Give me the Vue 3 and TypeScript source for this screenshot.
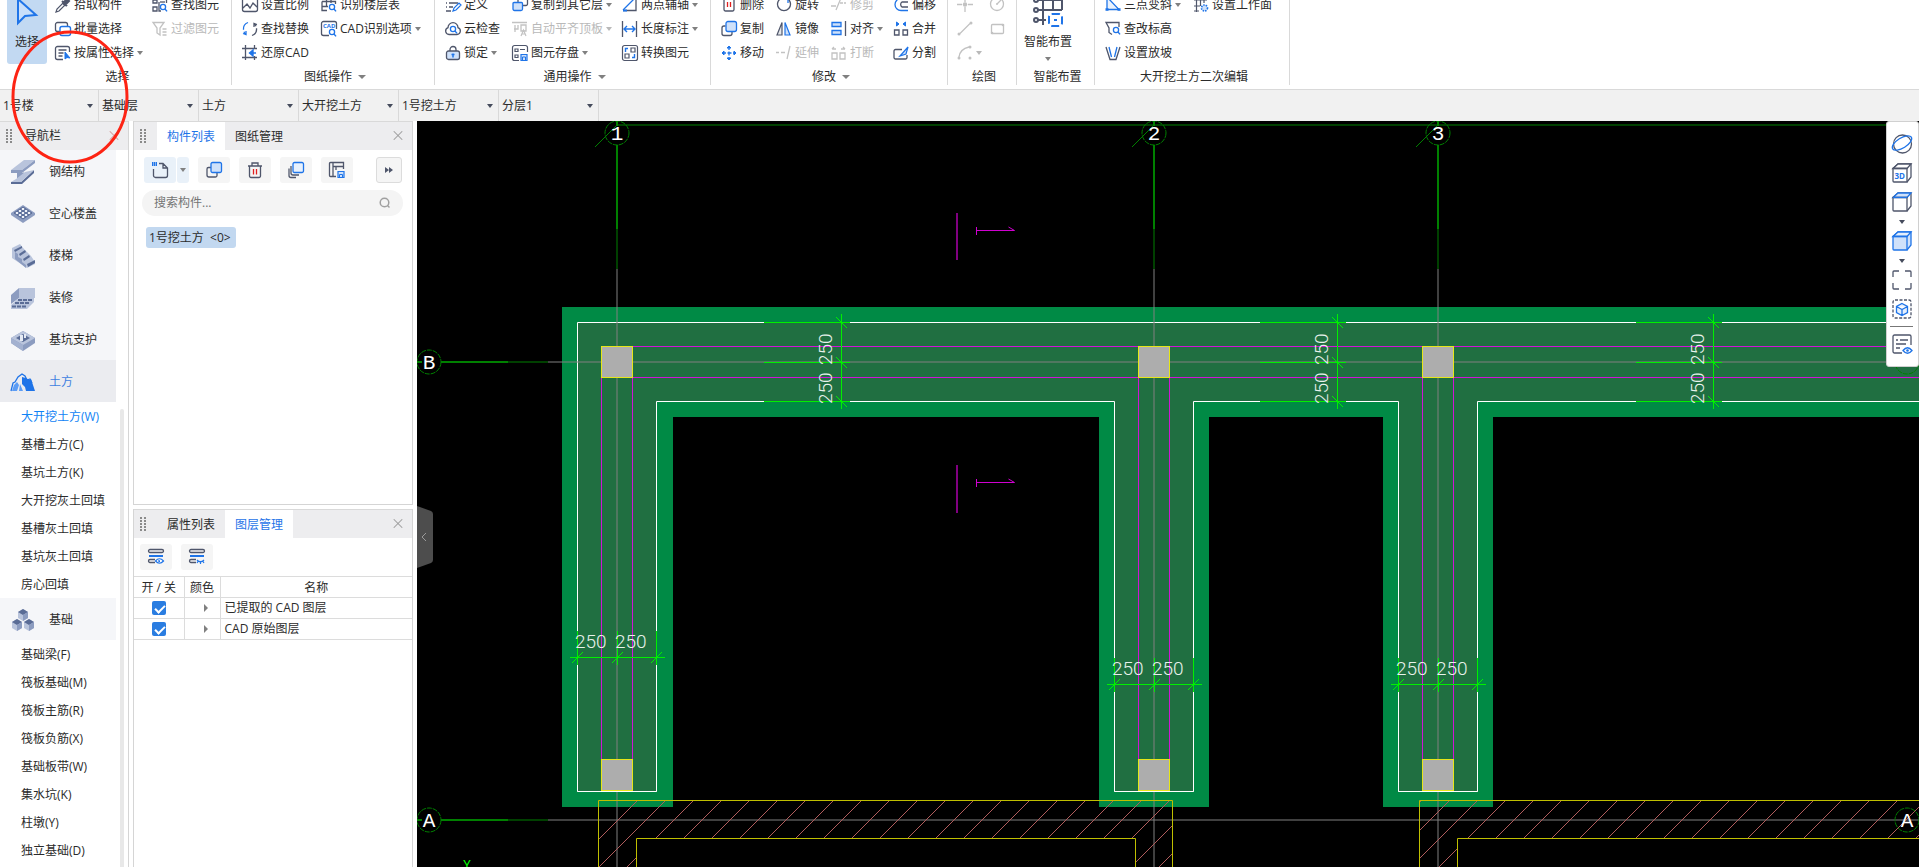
<script setup lang="ts">
import { ref } from 'vue'

interface Tool {
  label: string
  icon: string
  menu?: boolean
  off?: boolean
}
interface Group {
  title: string
  titleMenu?: boolean
  key: string
  columns: Tool[][]
}

const D = '#4f566b'
const B = '#1f74e8'
const L = '#cfe1fa'
const G = '#c2c2c2'
const R = '#e02020'

const s = (d: string, c: string, w = 1.3, fill = 'none', extra = '') =>
  `<path d="${d}" fill="${fill}" stroke="${c}" stroke-width="${w}" ${extra}/>`
const lens = (x: number, y: number) =>
  `<circle cx="${x}" cy="${y}" r="2.6" fill="#fff" stroke="${B}" stroke-width="1.3"/>` +
  s(`M${x + 2} ${y + 2}l2 2.4`, B, 1.4)

const icons: Record<string, string> = {
  pick: s('M1 15l1-3 6-6 2 2-6 6z', D, 1.2) + s('M7 4l5 5M8 6l4-4 2 2-4 4z', D, 2, D),
  batch: s('M5 10.500H2.500a2 2 0 0 1-2-2v-5a2 2 0 0 1 2-2h8a2 2 0 0 1 2 2V5', D) + s('M7 5.500h6.500a2 2 0 0 1 2 2v5a2 2 0 0 1-2 2H7a2 2 0 0 1-2-2v-5a2 2 0 0 1 2-2z', B, 1.4, '#fff'),
  attr: s('M8 14.500H2.500a2 2 0 0 1-2-2v-9a2 2 0 0 1 2-2h10a2 2 0 0 1 2 2V7M3.500 5h8M3.500 8h5M3.500 11h4', D) + s('M10 7v7l2-1.500 3 .5z', B, 1, B),
  find: s('M1 3h4v3H1zM1 10h4v4H1zM7 2h7.500v4M7 5v9h2', D) + s('M8 5h5', D) + lens(11, 10),
  filter: s('M1 1.500h11L8 7v7l-3-2V7zM10.500 8h4M10.500 11h4M10.500 14h4', G),
  ratio: s('M2.500 1.500h11a2 2 0 0 1 2 2v9a2 2 0 0 1-2 2h-11a2 2 0 0 1-2-2v-9a2 2 0 0 1 2-2zM1 11l4-4 3 4 3-5 4 4', D),
  replace: s('M6 1.500A7 7 0 0 0 3.500 13M1 12.500l3 1V10', B, 1.3, 'none', 'stroke-dasharray="9 2"') + s('M10 14.500A7 7 0 0 0 12.500 3M15 3.500l-3-1V6', D, 1.3, 'none', 'stroke-dasharray="9 2"'),
  restore: s('M3.500 0v15M0 3.500h15M12.500 0v4M12.500 11v4M0 12.500h15', D) + s('M14 8H8M11 5L7.500 8 11 11z', B, 1.4, B),
  floor: s('M5.500 1v9M1 4.500h13.500V7M1 4.500v5h6M1 9.500v4h5M10 1v5', D) + lens(11, 10),
  cadopt: s('M8 14.500H2.500a2 2 0 0 1-2-2v-10a2 2 0 0 1 2-2h11a2 2 0 0 1 2 2V8', D) + `<text x="2" y="7" font-size="6" font-weight="700" fill="${B}" font-family="Open Sans, sans-serif">CAD</text>` + lens(11, 11),
  define: s('M1 2h1M1 6h1M1 10h1M4 2h10M4 6h9M4 10h4M1 14h5', D) + s('M8 14l1-3 5-5 2 2-5 5z', B, 1.2),
  cloud: s('M4 13.500a3.500 3.500 0 0 1-1-6.800 5 5 0 0 1 10 0 3.500 3.500 0 0 1-1 6.800z', D) + lens(8, 8),
  lock: s('M5 6V4.500a3 3 0 0 1 6 0V6', D) + s('M3.500 6h9a2 2 0 0 1 2 2v4.500a2 2 0 0 1-2 2h-9a2 2 0 0 1-2-2V8a2 2 0 0 1 2-2z', D, 1.3, L) + s('M8 8.500v4M6.500 9.500h3', B, 1.5),
  copyto: s('M7 1h7a1.500 1.500 0 0 1 1.500 1.500V7A1.500 1.500 0 0 1 14 8.500h-3', D) + s('M6 5V2.500A1.500 1.500 0 0 1 7.500 1', D) + s('M2 5.500h7.500a1 1 0 0 1 1 1V12a1.500 1.500 0 0 1-1.500 1.500H2.500A1.500 1.500 0 0 1 1 12V6.500a1 1 0 0 1 1-1z', B, 1.3, L),
  align: s('M0 1.500h15M3 4v7M6 4v4H2M9 4h5v6H9z', G) + s('M9 15l2.500-6 2.500 6M10 13h3', G, 1.2),
  save: s('M3 4h3v2.500H3zM3 10h3v2.500H3zM8 4.500h5M15.500 7V2.500a2 2 0 0 0-2-2h-11a2 2 0 0 0-2 2v11a2 2 0 0 0 2 2H7', D, 1.2) + s('M9 9.500h6v6H9z', B, 1.2, L) + s('M10.500 15v-3h3v3', B, 1),
  axis: s('M1 13.500h13V1', D) + s('M1 13L13 1', B) + s('M1 13.500h4M11 1h3', B, 2),
  length: s('M.500 0v16M14.500 0v16', D) + s('M2 8h11M5 5L2 8l3 3M10 5l3 3-3 3', B, 1.4),
  convert: s('M2.500.500h11a2 2 0 0 1 2 2v11a2 2 0 0 1-2 2h-11a2 2 0 0 1-2-2v-11a2 2 0 0 1 2-2zM9 3h4v4H9zM3 9h4v4H3z', D, 1.2) + s('M3.500 7V3.500H6M12.500 9v3.500H10', B, 1.4),
  del: s('M3 0v12.500a1.500 1.500 0 0 0 1.500 1.500h7a1.500 1.500 0 0 0 1.500-1.500V0', D) + s('M6.500 5v5M9.500 5v5', R),
  copy: s('M4.500 5H3a2 2 0 0 0-2 2v5.500a2 2 0 0 0 2 2h6a2 2 0 0 0 2-2V11', D) + s('M7 .500h6.500a2 2 0 0 1 2 2v6a2 2 0 0 1-2 2H7a2 2 0 0 1-2-2v-6a2 2 0 0 1 2-2z', B, 1.3, L),
  move: s('M8 1v14M1 8h14', B, 1.3, 'none', 'stroke-dasharray="4 1.500"') + s('M6 3l2-2 2 2zM6 13l2 2 2-2zM3 6L1 8l2 2zM13 6l2 2-2 2z', B, 1, B),
  rotate: s('M4 2a6.500 6.500 0 1 0 8 0', D) + s('M12 6V1', B),
  mirror: s('M6 1.500v12.500H1z', D, 1.2, '#e5e7ea') + s('M9 1.500v12.500h5z', B, 1.2, L),
  extend: s('M0 7.500h3M5 7.500h4M11 14l3-13', G),
  trim: s('M0 9h5M5 13L10 1M9 6h3M13 6h2', G),
  alignto: s('M1 1.500h9v4H1zM1 9.500h9v4H1z', B, 1.3, L) + s('M14.500 0v15', D),
  breakup: s('M1 8h5v6H1zM9 8h5v6H9zM1 4h4M1 4l2-2M14 4h-4M14 4l-2-2', G),
  offset: s('M15 13.500H8a6 6 0 0 1 0-12h7', B) + s('M15 5H9a3 3 0 0 0 0 5h6', D),
  merge: s('M1.500 9h4.500v5H1.500zM10 9h4.500v5H10z', D) + s('M3 3h2M3.500 1L6 3 3.500 5zM13 3h-2M12.500 1L10 3l2.500 2z', B, 1, B),
  split: s('M9 4.500H2.500a1.500 1.500 0 0 0-1.500 1.500v6.500A1.500 1.500 0 0 0 2.500 14h10a1.500 1.500 0 0 0 1.500-1.500V10', D) + s('M7 11l8-9-2 7z', B, 1.2, L),
  point: s('M8 0v5M8 10v5M0 7.500h5M11 7.500h5', G) + `<circle cx="8" cy="7.500" r="2.200" fill="${G}"/>`,
  line: s('M3 12.500L13 2.500', G) + `<circle cx="2" cy="13" r="1.500" fill="${G}"/><circle cx="14" cy="2" r="1.500" fill="${G}"/>`,
  arc: s('M2 12Q3 4 12 2', G) + `<circle cx="2" cy="13" r="1.500" fill="${G}"/><circle cx="13" cy="2" r="1.500" fill="${G}"/><circle cx="13" cy="13" r="1.500" fill="${G}"/>`,
  circle: `<circle cx="8" cy="7" r="6.500" fill="none" stroke="${G}" stroke-width="1.300"/>` + s('M8 7l4-4M7 7h2', G),
  rect: s('M3.500 3.500h10a1 1 0 0 1 1 1v7a1 1 0 0 1-1 1h-10a1 1 0 0 1-1-1v-7a1 1 0 0 1 1-1z', G) + `<circle cx="14" cy="4" r="1.300" fill="${G}"/><circle cx="3" cy="12" r="1.300" fill="${G}"/>`,
  slope: s('M2 0v12.500h12z', B, 1.3, '#eaf2fd') + s('M.500 12.500h3M12.500 12.500h3', B, 2.4),
  height: s('M7 13.500l-3-2V7L1 1.500h13V6', D) + lens(11, 9),
  grade: s('M1 2l4 12.500h6L15 2', D) + s('M4 2l2.500 10M12 2L9.500 12', B),
  workface: s('M1 3h13M1 9h6M1 14h5M3.500 0v15M11 0v6M7.500 0v9', D, 1.2) + `<circle cx="11.500" cy="11" r="3" fill="${L}" stroke="${B}" stroke-width="1.600" stroke-dasharray="1.500 1"/>`,
  plus: s('M7 1.500h4l4.500 4.500v7.500a2 2 0 0 1-2 2h-10a2 2 0 0 1-2-2V7M11 1.500V6h4.500', D) + s('M0 1h5M0 3h5', B, 2, 'none', 'stroke-dasharray="1.500 .500"'),
  dup: s('M5 5.500H2.500a1.500 1.500 0 0 0-1.500 1.500v6a2 2 0 0 0 2 2h6.500a1.500 1.500 0 0 0 1.500-1.500V11', D) + s('M6.500.500h7.500a1.500 1.500 0 0 1 1.500 1.500v7a1.500 1.500 0 0 1-1.500 1.500H6.500A1.500 1.500 0 0 1 5 9V2A1.500 1.500 0 0 1 6.500.500z', B, 1.3, L),
  trash: s('M1 4h14M5 4V1h6v3M2.500 4v10a1.500 1.500 0 0 0 1.500 1.500h8a1.500 1.500 0 0 0 1.500-1.500V4', D) + s('M6.500 7v5.500M9.500 7v5.500', R),
  layers: s('M3 4v7a2 2 0 0 0 2 2h6M1 6.500v7a2 2 0 0 0 2 2h5', D) + s('M6.500.500h7.500a1.500 1.500 0 0 1 1.500 1.500v7a1.500 1.500 0 0 1-1.500 1.500H6.500A1.500 1.500 0 0 1 5 9V2A1.500 1.500 0 0 1 6.500.500z', B, 1.3, '#e8f1fd'),
  store: s('M7 14.500H1.500a1 1 0 0 1-1-1v-12a1 1 0 0 1 1-1h13V7M4 .500v14M4 4.500h11M7 4.500V8', D) + s('M9 9.500h6v6H9z', B, 1.2, L) + s('M10.500 15v-2.500h3V15', B, 1),
  eyeon: s('M2 .500h12a1.500 1.500 0 0 1 0 3H2a1.500 1.500 0 0 1 0-3M7 13.500H2a1.500 1.500 0 0 1 0-3h5', D) + s('M1 7h14', B, 2) + s('M7.500 12q4-4.500 8 0-4 4.500-8 0z', B, 1.2, '#fff') + s('M11 11v1.500h1', B),
  eyeoff: s('M2 .500h12a1.500 1.500 0 0 1 0 3H2a1.500 1.500 0 0 1 0-3M7 13.500H2a1.500 1.500 0 0 1 0-3h5', D) + s('M1 7h14', B, 2) + s('M8 11q3.500 3.500 7 0M9 12.500l-1 1.500M11.500 13v2M14 12.500l1 1.500', B, 1.2),
}

const groups: Group[] = [
  { title: '选择', key: 'pick', columns: [
    [{ label: '拾取构件', icon: 'pick' }, { label: '批量选择', icon: 'batch' }, { label: '按属性选择', icon: 'attr', menu: true }],
    [{ label: '查找图元', icon: 'find' }, { label: '过滤图元', icon: 'filter', off: true }]] },
  { title: '图纸操作', titleMenu: true, key: 'sheet', columns: [
    [{ label: '设置比例', icon: 'ratio' }, { label: '查找替换', icon: 'replace' }, { label: '还原CAD', icon: 'restore' }],
    [{ label: '识别楼层表', icon: 'floor' }, { label: 'CAD识别选项', icon: 'cadopt', menu: true }]] },
  { title: '通用操作', titleMenu: true, key: 'common', columns: [
    [{ label: '定义', icon: 'define' }, { label: '云检查', icon: 'cloud' }, { label: '锁定', icon: 'lock', menu: true }],
    [{ label: '复制到其它层', icon: 'copyto', menu: true }, { label: '自动平齐顶板', icon: 'align', menu: true, off: true }, { label: '图元存盘', icon: 'save', menu: true }],
    [{ label: '两点辅轴', icon: 'axis', menu: true }, { label: '长度标注', icon: 'length', menu: true }, { label: '转换图元', icon: 'convert' }]] },
  { title: '修改', titleMenu: true, key: 'modify', columns: [
    [{ label: '删除', icon: 'del' }, { label: '复制', icon: 'copy' }, { label: '移动', icon: 'move' }],
    [{ label: '旋转', icon: 'rotate' }, { label: '镜像', icon: 'mirror' }, { label: '延伸', icon: 'extend', off: true }],
    [{ label: '修剪', icon: 'trim', off: true }, { label: '对齐', icon: 'alignto', menu: true }, { label: '打断', icon: 'breakup', off: true }],
    [{ label: '偏移', icon: 'offset' }, { label: '合并', icon: 'merge' }, { label: '分割', icon: 'split' }]] },
  { title: '绘图', key: 'draw', columns: [
    [{ label: '', icon: 'point', off: true }, { label: '', icon: 'line', off: true }, { label: '', icon: 'arc', menu: true, off: true }],
    [{ label: '', icon: 'circle', off: true }, { label: '', icon: 'rect', off: true }]] },
  { title: '智能布置', key: 'smart', columns: [] },
  { title: '大开挖土方二次编辑', key: 'edit', columns: [
    [{ label: '三点变斜', icon: 'slope', menu: true }, { label: '查改标高', icon: 'height' }, { label: '设置放坡', icon: 'grade' }],
    [{ label: '设置工作面', icon: 'workface' }]] },
]

const pickers = [
  { name: '单体', value: '1号楼' },
  { name: '楼层', value: '基础层' },
  { name: '专业', value: '土方' },
  { name: '构件类型', value: '大开挖土方' },
  { name: '构件', value: '1号挖土方' },
  { name: '分层', value: '分层1' },
]

const P = '#8c9cc0'
const Q = '#b9c4dc'
const K = '#5a6c96'
const f = (d: string, c: string) => `<path d="${d}" fill="${c}"/>`
const nav = [
  { label: '钢结构', icon: f('M13 0h11L11 10H0z', Q) + f('M24 0v3L11 13H0v-3h11z', P) + f('M13 12v5L6 22v-9h6z', P) + f('M23 10v3L11 24H0v-2h10z', K) + f('M14 12l9-2-13 12H0l5-3z', Q), subs: [] },
  { label: '空心楼盖', icon: f('M12 3l12 8v2l-12 8L0 13v-2z', P) + '<path d="M3 11l9 6M6 9l9 6M9 7l9 6M12 5l9 6M21 11l-9 6M18 9l-9 6M15 7l-9 6M12 5l-9 6" stroke="#5a6c96" stroke-width="1"/>' + '<path d="M5 11h2M8 9h2M11 7h2M14 9h2M17 11h2M11 11h2M8 13h2M14 13h2M11 15h2" stroke="#eef1f8" stroke-width="2"/>', subs: [] },
  { label: '楼梯', icon: f('M1 4l8-4 4 5 3 3 4 4 4 6v2l-8 4L1 14z', Q) + f('M3 6l8-4v2L4 8zM8 10l6-4 1 2-6 4zM12 15l6-4 1 2-6 4zM16 20l8-4v3l-7 4z', K) + f('M4 8l3 2v3l4 2v3l4 3v3L4 15z', P), subs: [] },
  { label: '装修', icon: f('M8 2h16v10H8z', Q) + f('M8 2v10L0 18V9z', P) + f('M8 12h15v4l-7 7H0v-4z', Q) + '<path d="M7 14h15M4 17h15M1 20.500h15" stroke="#5a6c96" stroke-width="2" stroke-dasharray="4 1"/>', subs: [] },
  { label: '基坑支护', icon: f('M12 3l12 7v5l-12 8L0 15v-5z', P) + f('M12 3l12 7-12 7L0 10z', Q) + f('M12 6l7 4-7 4-7-4z', K) + f('M9 7h3v6H9zM13 6h2v4h-2z', '#e4e9f3') + f('M0 10l12 7v6L0 15z', '#a3b1d0'), subs: [] },
  { label: '土方', active: true, icon: f('M11 7l4 1 3 2 2-1 4 12h-9l-1-4-3-3z', B) + f('M3 15l3-3 2 3-2 6H1zM9 14l3 7H8z', '#5b9cf5') + s('M0 21l2-8 2-1 3-5 4-3 3 2 2 4 3-1 2 4', B, 1.3), subs: ['大开挖土方(W)', '基槽土方(C)', '基坑土方(K)', '大开挖灰土回填', '基槽灰土回填', '基坑灰土回填', '房心回填'] },
  { label: '基础', icon: ['6 1', '0 11', '12 11'].map(t => `<g transform="translate(${t})">` + f('M6 0l5 3v6l-5 3-5-3V3z', Q) + f('M6 0l5 3-5 3-5-3z', K) + f('M6 6l5-3v6l-5 3z', P) + '</g>').join(''), subs: ['基础梁(F)', '筏板基础(M)', '筏板主筋(R)', '筏板负筋(X)', '基础板带(W)', '集水坑(K)', '柱墩(Y)', '独立基础(D)'] },
]
const activeSub = ref('大开挖土方(W)')

const cube = (front: string, top: string, fill: string, topFill: string) =>
  s('M1 5.500L6 1h13v13l-4 5', front, 1.3, fill) + s('M1 5.500L6 1h13l-4 4.500z', top, 1.3, topFill) +
  s('M2 5.500h13V19H2a1 1 0 0 1-1-1V5.500z', front, 1.3, fill) + s('M1 5.500h14', top, 1.3)
const views = [
  { name: '动态观察', icon: '<circle cx="10.500" cy="10" r="9" fill="none" stroke="#4f566b" stroke-width="1.300"/><ellipse cx="10" cy="9" rx="11" ry="5" fill="none" stroke="#1f74e8" stroke-width="1.300" transform="rotate(-32 10 9)"/>' },
  { name: '三维', icon: cube(D, D, '#fff', '#fff') + `<text x="2.500" y="16" font-size="8" font-weight="700" fill="${B}" font-family="Open Sans, sans-serif">3D</text>` },
  { name: '俯视', icon: cube(D, B, '#fff', L), menu: true },
  { name: '实体', icon: cube(B, B, L, '#e5effc'), menu: true },
  { name: '全屏', icon: s('M1 7V2a1 1 0 0 1 1-1h5M13 1h5a1 1 0 0 1 1 1v5M19 13v5a1 1 0 0 1-1 1h-5M7 19H2a1 1 0 0 1-1-1v-5', D) },
  { name: '选中三维', icon: s('M3 1h14a2 2 0 0 1 2 2v14a2 2 0 0 1-2 2H3a2 2 0 0 1-2-2V3a2 2 0 0 1 2-2z', D, 1.3, 'none', 'stroke-dasharray="3 1.500"') + s('M10 4.500l5.500 3v6L10 16.500l-5.500-3v-6zM4.500 7.500l5.500 3 5.500-3M10 10.500v6', B, 1.3, '#e5effc') },
  { name: '显示设置', divided: true, icon: s('M10 19H2.500A1.500 1.500 0 0 1 1 17.500v-15A1.500 1.500 0 0 1 2.500 1h15A1.500 1.500 0 0 1 19 2.500V11M4 6h2M8 6h8M4 10h10M4 14h4', D) + s('M11 16.500q4.500-5.500 9 0-4.500 5.500-9 0z', B, 1.3, '#fff') + '<circle cx="15.500" cy="16.500" r="1.300" fill="#1f74e8"/>' },
]

const layers = ref([
  { name: '已提取的 CAD 图层', on: true },
  { name: 'CAD 原始图层', on: true },
])

const axes = [{ x: 617, n: '1' }, { x: 1154, n: '2' }, { x: 1438, n: '3' }]
const beamDims = [842, 1338, 1714]
const footDims = [{ x: 617, y: 657 }, { x: 1154, y: 684 }, { x: 1438, y: 684 }]
const hatch = Array.from({ length: 54 }, (_, i) => 1438 + i * 28)
const far = 4000
</script>

<template>
  <div class="app">
    <header class="ribbon">
      <section v-for="g in groups" :key="g.key" class="group" :class="g.key">
        <div class="body">
          <button v-if="g.key === 'pick'" class="big active" type="button">
            <svg width="22" height="26" viewBox="0 0 22 26"><path d="M2 1v24l7-7 11-1z" fill="#c9dffa" stroke="#1f74e8" stroke-width="2" /></svg>
            <span>选择</span>
          </button>
          <button v-if="g.key === 'smart'" class="big" type="button">
            <svg width="32" height="32" viewBox="0 0 32 32" fill="none" stroke="#4f566b" stroke-width="2">
              <path d="M11 0v30M21 0v16M6 5h24M6 15h24M6 25h8M30 5v10" />
              <circle cx="4" cy="5" r="2" /><circle cx="4" cy="15" r="2" /><circle cx="4" cy="25" r="2" />
              <rect x="17" y="19" width="13" height="12" rx="3" stroke="#1f74e8" stroke-dasharray="8 3" />
              <path d="M22 25h3" stroke="#1f74e8" />
            </svg>
            <span>智能布置</span>
            <i class="caret"></i>
          </button>
          <div v-for="(col, c) in g.columns" :key="c" class="col">
            <button v-for="t in col" :key="t.icon" class="tool" :class="{ off: t.off, menu: t.menu }" :aria-label="t.label || t.icon" type="button">
              <svg width="16" height="16" viewBox="0 0 16 16" v-html="icons[t.icon]"></svg>
              <span v-if="t.label">{{ t.label }}</span>
              <i v-if="t.menu" class="caret"></i>
            </button>
          </div>
        </div>
        <div class="title">{{ g.title }}<i v-if="g.titleMenu" class="caret"></i></div>
      </section>
    </header>

    <nav class="pickers">
      <label v-for="p in pickers" :key="p.name" class="picker">
        <select :aria-label="p.name"><option>{{ p.value }}</option></select>
        <i class="caret dark"></i>
      </label>
    </nav>

    <main class="work">
      <aside class="nav">
        <div class="head"><i class="grip"></i><span class="name">导航栏</span><button class="close red" type="button" aria-label="关闭导航栏"></button></div>
        <div class="tree">
          <div class="items">
            <template v-for="n in nav" :key="n.label">
              <button class="cat" :class="{ active: n.active }" type="button">
                <svg width="24" height="24" viewBox="0 0 24 24" v-html="n.icon"></svg>{{ n.label }}
              </button>
              <button v-for="sub in n.subs" :key="sub" class="sub" :class="{ on: sub === activeSub }" type="button" @click="activeSub = sub">{{ sub }}</button>
            </template>
          </div>
          <div class="track"></div>
        </div>
      </aside>

      <div class="side">
        <section class="panel list">
          <div class="head">
            <i class="grip"></i>
            <button class="tab on" type="button">构件列表</button><button class="tab" type="button">图纸管理</button>
            <button class="close" type="button" aria-label="关闭"></button>
          </div>
          <div class="bar">
            <div class="split">
              <button class="tile tint" type="button" aria-label="新建"><svg width="16" height="16" viewBox="0 0 16 16" v-html="icons.plus"></svg></button>
              <button class="drop" type="button" aria-label="新建选项"><i class="caret"></i></button>
            </div>
            <button v-for="k in ['dup', 'trash', 'layers', 'store']" :key="k" class="tile" type="button" :aria-label="k"><svg width="16" height="16" viewBox="0 0 16 16" v-html="icons[k]"></svg></button>
            <button class="more" type="button" aria-label="更多"><svg width="8" height="6" viewBox="0 0 8 6"><path d="M0 0l4 3-4 3zM4 0l4 3-4 3z" fill="#4f566b" /></svg></button>
          </div>
          <label class="search">
            <input type="text" placeholder="搜索构件..." aria-label="搜索构件" />
            <svg width="12" height="12" viewBox="0 0 12 12" fill="none" stroke="#a0a0a0" stroke-width="1.500"><circle cx="5.500" cy="5.500" r="4.300" /><path d="M8.500 8.500l2 2" /></svg>
          </label>
          <button class="entry" type="button">1号挖土方 &nbsp;&lt;0&gt;</button>
        </section>

        <section class="panel manage">
          <div class="head">
            <i class="grip"></i>
            <button class="tab" type="button">属性列表</button><button class="tab on" type="button">图层管理</button>
            <button class="close" type="button" aria-label="关闭"></button>
          </div>
          <div class="bar low">
            <button v-for="k in ['eyeon', 'eyeoff']" :key="k" class="tile" type="button" :aria-label="k"><svg width="16" height="16" viewBox="0 0 16 16" v-html="icons[k]"></svg></button>
          </div>
          <table>
            <thead><tr><th class="c1">开 / 关</th><th class="c2">颜色</th><th>名称</th></tr></thead>
            <tbody>
              <tr v-for="l in layers" :key="l.name">
                <td class="mid"><input v-model="l.on" type="checkbox" :aria-label="l.name" /></td>
                <td><i class="fold"></i></td>
                <td class="label">{{ l.name }}</td>
              </tr>
            </tbody>
          </table>
        </section>
      </div>

      <section class="canvas">
        <svg class="drawing" width="100%" height="100%" fill="none">
          <defs>
            <clipPath id="walls">
              <path d="M599 801H1173V1000H1135V839H637V1000H599z" />
              <path :d="`M1420 801H${far}V839H1457V1000H1420z`" />
            </clipPath>
          </defs>
          <g transform="translate(-417 -121)">
            <path :d="`M562 307H${far}V417H1493V807H1383V417H1209V807H1099V417H673V807H562z`" fill="#008a45" />
            <path :d="`M577.5 322.500H${far}V401.500H1477.500V791.500H1398.500V401.500H1193.500V791.500H1114.500V401.500H656.500V791.500H577.500V322.500z`" fill="#206f41" stroke="#fff" />

            <g stroke="#d014d6">
              <path :d="`M617 346.500H${far}M617 377.500H${far}`" />
              <path v-for="a in axes" :key="a.n" :d="`M${a.x - 15.5} 378V760M${a.x + 15.5} 378V760`" />
            </g>
            <g stroke="#808080" stroke-opacity=".5" stroke-width="2">
              <path :d="`M548 362H${far}`" /><path :d="`M548 820H${far}`" />
              <path v-for="a in axes" :key="a.n" :d="`M${a.x} 269V${far}`" />
            </g>
            <g fill="#adadad" stroke="#e6e619">
              <template v-for="a in axes" :key="a.n">
                <rect :x="a.x - 15.5" y="346.500" width="31" height="31" />
                <rect :x="a.x - 15.5" y="759.500" width="31" height="31" />
                <path :d="`M${a.x - 39.5} 791.5h79`" stroke="#fff" />
              </template>
            </g>

            <g clip-path="url(#walls)" stroke="#b05c5c">
              <path v-for="h in hatch" :key="h" :d="`M${h - 790} 790L${h - 900} 900`" />
            </g>
            <g stroke="#bfbf00">
              <path d="M598.500 1000V800.500H1172.500V1000M636.500 1000V838.500H1135.500V1000" />
              <path :d="`M1419.500 1000V800.500H${far}M1457.500 1000V838.500H${far}`" />
            </g>

            <g stroke="#008000">
              <path :d="`M617 125H${far}`" stroke="#004000" stroke-width="2" />
              <template v-for="a in axes" :key="a.n">
                <path :d="`M${a.x} 121V126M${a.x} 145V229`" stroke-width="2" />
                <path :d="`M${a.x} 229V269`" stroke="#004000" stroke-width="2" />
                <path :d="`M${a.x - 22} 147L${a.x - 1} 126`" />
                <circle :cx="a.x" cy="133" r="12" stroke-dasharray="5 1" />
              </template>
              <template v-for="y in [362, 820]" :key="y">
                <path :d="`M417 ${y}h5M441 ${y}H508`" stroke-width="2" />
                <path :d="`M508 ${y}H548`" stroke="#004000" stroke-width="2" />
                <circle cx="429" :cy="y" r="12" stroke-dasharray="5 1" />
                <circle cx="1907" :cy="y" r="12" stroke-dasharray="5 1" />
              </template>
            </g>
            <g class="mark">
              <text v-for="a in axes" :key="a.n" :x="a.x" y="140">{{ a.n }}</text>
              <text x="429" y="369">B</text><text x="429" y="827">A</text><text x="1907" y="827">A</text>
            </g>

            <g class="dim">
              <template v-for="x in beamDims" :key="x">
                <path :d="`M${x - .5} 314V409M${x - 78} 322.5h86M${x - 78} 362.5h86M${x - 78} 401.5h86`" />
                <path v-for="y in [322, 362, 401]" :key="y" :d="`M${x - 6} ${y - 5}l11 11`" />
                <text :transform="`translate(${x - 10} 365) rotate(-90)`">250</text>
                <text :transform="`translate(${x - 10} 404) rotate(-90)`">250</text>
              </template>
              <template v-for="d in footDims" :key="d.x">
                <path :d="`M${d.x - 47} ${d.y + .5}h95M${d.x - 39.5} ${d.y - 26}v34M${d.x + .5} ${d.y - 26}v34M${d.x + 39.5} ${d.y - 26}v34`" />
                <path v-for="o in [-40, 0, 39]" :key="o" :d="`M${d.x + o - 5} ${d.y + 6}l11 -11`" />
                <text :x="d.x - 42" :y="d.y - 9">250</text>
                <text :x="d.x - 2" :y="d.y - 9">250</text>
              </template>
            </g>

            <g stroke="#d000d0">
              <path v-for="y in [231, 483]" :key="y" :d="`M976.500 ${y - 4}v8M976.500 ${y - .5}H1014.500l-6 -3.500`" />
              <path d="M957 213V260M957 465V513" stroke="#800080" stroke-width="2" />
            </g>
            <text class="origin" x="467" y="869">Y</text>
          </g>
        </svg>

        <button class="handle" type="button" aria-label="收起面板">
          <svg width="16" height="62" viewBox="0 0 16 62"><path d="M0 0l14 5q2 1 2 3v46q0 2-2 3L0 62z" fill="#4d4d4d" /><path d="M9 27l-4 4 4 4" fill="none" stroke="#9a9a9a" /></svg>
        </button>

        <div class="views">
          <template v-for="v in views" :key="v.name">
            <hr v-if="v.divided" />
            <button type="button" :aria-label="v.name">
              <svg width="20" height="20" viewBox="0 0 20 20" v-html="v.icon"></svg>
              <i v-if="v.menu" class="caret dark"></i>
            </button>
          </template>
        </div>
      </section>
    </main>

    <svg class="ring" width="120" height="134" viewBox="0 0 120 134"><ellipse cx="60" cy="67" rx="57" ry="65" fill="none" stroke="#fd2414" stroke-width="3" /></svg>
  </div>
</template>

<style>
body {
  margin: 0;
  overflow: hidden;
}
</style>

<style scoped>
.app {
  position: relative;
  display: flex;
  flex-direction: column;
  height: 100vh;
  overflow: hidden;
  background: #fff;
  color: #2b2b2b;
  font: 12px/16px "Open Sans", "Noto Sans CJK SC", sans-serif;
}
.app * { box-sizing: border-box; }
button, select, input { font: inherit; color: inherit; }
button { padding: 0; border: 0; background: none; }
svg { display: block; flex: none; overflow: visible; }

.caret {
  flex: none;
  width: 0;
  height: 0;
  border: 3px solid transparent;
  border-top: 4px solid #808080;
  border-bottom: 0;
}
.caret.dark { border-top-color: #454b5c; }

.ribbon {
  display: flex;
  flex: none;
  height: 90px;
  overflow: hidden;
  border-bottom: 1px solid #d9d9d9;
}
.group {
  position: relative;
  display: flex;
  flex-direction: column;
}
.group::after {
  content: "";
  position: absolute;
  top: 0;
  right: 0;
  width: 1px;
  height: 85px;
  background: #d9d9d9;
}
.pick { width: 232px; }
.sheet { width: 203px; }
.common { width: 276px; }
.modify { width: 237px; }
.draw { width: 69px; }
.smart { width: 78px; }
.edit { width: 195px; }
.body {
  display: flex;
  gap: 12px;
  height: 72px;
  margin-top: -7px;
  padding-left: 10px;
}
.pick .body { padding-left: 7px; gap: 8px; }
.pick .col + .col { margin-left: 3px; }
.modify .body { gap: 12px; }
.edit .body { gap: 14px; }
.draw .body { padding-left: 9px; gap: 8px; }
.smart .body { padding-left: 6px; }
.col { display: flex; flex-direction: column; }
.draw .col { width: 24px; }
.tool {
  display: flex;
  align-items: center;
  gap: 3px;
  height: 24px;
  white-space: nowrap;
}
.tool.menu { margin-right: -2px; }
.tool.off { color: #b9b9b9; }
.tool.off .caret { border-top-color: #b9b9b9; }
.big {
  display: flex;
  flex-direction: column;
  align-items: center;
  width: 40px;
  height: 71px;
  padding-top: 5px;
  border-radius: 0 0 3px 3px;
}
.big.active { background: #c2d9f2; }
.big span { white-space: nowrap; }
.pick .big span { margin-top: 10px; }
.smart .big { width: 50px; padding-top: 2px; }
.smart .big span { margin-top: 7px; }
.smart .big .caret { margin-top: 7px; }
.title {
  display: flex;
  align-items: center;
  justify-content: center;
  gap: 6px;
  height: 24px;
  padding-left: 3px;
}
.title .caret { border-width: 4px 4px 0; }

.pickers {
  display: flex;
  flex: none;
  height: 31px;
  background: #f1f1f1;
}
.picker {
  display: flex;
  align-items: center;
  width: 100px;
  height: 31px;
  padding-right: 5px;
  border-right: 1px solid #d9d9d9;
}
.picker:first-child { width: 99px; }
.picker select {
  flex: 1;
  min-width: 0;
  height: 30px;
  padding: 0 0 0 3px;
  border: 0;
  appearance: none;
  background: none;
}

.work { display: flex; flex: 1; min-height: 0; }
.head {
  display: flex;
  align-items: center;
  flex: none;
  height: 29px;
  border-top: 1px solid #d9d9d9;
  background: #ededef;
}
.grip {
  flex: none;
  width: 6px;
  height: 14px;
  margin-left: 6px;
  background: repeating-linear-gradient(transparent 0 2px, #ededef 2px 3px), linear-gradient(90deg, #8a8a8a 0 2px, transparent 2px 4px, #8a8a8a 4px 6px);
}
.close {
  position: relative;
  width: 10px;
  height: 10px;
  margin-left: auto;
  margin-right: 9px;
}
.close::before, .close::after {
  content: "";
  position: absolute;
  top: 4px;
  left: -1px;
  width: 12px;
  height: 1px;
  background: #9a9a9a;
  transform: rotate(45deg);
}
.close::after { transform: rotate(-45deg); }
.close.red::before, .close.red::after { background: #d59a9a; }

.nav {
  display: flex;
  flex-direction: column;
  flex: none;
  width: 129px;
  border-right: 1px solid #d5d5d5;
}
.nav .name { margin-left: 13px; }
.tree { display: flex; flex: 1; min-height: 0; }
.items { width: 116px; overflow: hidden; }
.cat {
  display: flex;
  align-items: center;
  gap: 14px;
  width: 100%;
  height: 42px;
  padding: 2px 0 0 11px;
  background: #f5f6f9;
}
.cat.active { background: #ebecf0; color: #3f7fe0; }
.sub {
  display: block;
  width: 100%;
  height: 28px;
  padding: 2px 0 0 21px;
  text-align: left;
  white-space: nowrap;
}
.sub.on { color: #1083f5; }
.track {
  width: 4px;
  margin: 259px 0 0 4px;
  border-radius: 2px 2px 0 0;
  background: #e8e8e8;
}

.side {
  display: flex;
  flex-direction: column;
  flex: none;
  gap: 4px;
  width: 280px;
  margin: 0 4px;
}
.panel {
  border: 1px solid #d5d5d5;
  border-top: 0;
}
.list { flex: none; height: 384px; }
.manage { flex: 1; border-bottom: 0; }
.tab { width: 68px; height: 28px; padding-top: 1px; }
.grip + .tab { margin-left: 11px; }
.tab.on { background: #fff; color: #1f74e8; }
.bar {
  display: flex;
  align-items: center;
  gap: 9px;
  height: 40px;
  padding: 0 10px;
}
.bar.low { padding: 0 6px; height: 38px; }
.split { display: flex; gap: 1px; }
.tile, .drop, .more {
  display: flex;
  align-items: center;
  justify-content: center;
  width: 32px;
  height: 26px;
  border-radius: 3px;
  background: #f5f5f5;
}
.tint, .drop { background: #e9f1f9; }
.drop { width: 12px; }
.more {
  width: 26px;
  margin-left: auto;
  border: 1px solid #dcdcdc;
}
.search {
  display: flex;
  align-items: center;
  height: 26px;
  margin: 0 9px 0 8px;
  padding: 0 12px;
  border-radius: 13px;
  background: #f4f4f4;
}
.search input {
  flex: 1;
  min-width: 0;
  padding: 0;
  border: 0;
  outline: 0;
  background: none;
}
.search input::placeholder { color: #757575; }
.entry {
  display: block;
  height: 21px;
  margin: 11px 0 0 12px;
  padding: 0 5px 0 3px;
  border-radius: 3px;
  background: #c2d8f0;
}

table {
  width: 100%;
  border-collapse: collapse;
  table-layout: fixed;
}
th, td {
  height: 21px;
  padding: 0;
  border: 1px solid #dcdcdc;
  font-weight: 400;
}
th { padding-top: 1px; }
th:first-child, td:first-child { border-left: 0; }
th:last-child, td:last-child { border-right: 0; }
.c1 { width: 50px; }
.c2 { width: 36px; }
.mid { text-align: center; }
.label { padding-left: 4px; }
td input {
  display: block;
  position: relative;
  width: 14px;
  height: 14px;
  margin: 0 auto;
  border-radius: 2px;
  appearance: none;
  background: #fff;
}
td input:checked { background: #2a7de1; }
td input:checked::after {
  content: "";
  position: absolute;
  top: 2px;
  left: 5px;
  width: 4px;
  height: 8px;
  border: solid #fff;
  border-width: 0 2px 2px 0;
  transform: rotate(45deg);
}
.fold {
  display: block;
  width: 0;
  height: 0;
  margin-left: 19px;
  border: 4px solid transparent;
  border-left-color: #808080;
  border-right: 0;
}

.canvas {
  position: relative;
  flex: 1;
  min-width: 0;
  overflow: hidden;
  background: #000;
}
.drawing { overflow: hidden; }
.mark text {
  fill: #fff;
  font: 21px "Liberation Mono", monospace;
  text-anchor: middle;
}
.dim path { stroke: #00f000; }
.dim text {
  fill: #e8f2ec;
  font: 300 19px "Roboto", sans-serif;
}
.origin {
  fill: #00ff00;
  font: 13px "Noto Sans", sans-serif;
  text-anchor: middle;
}
.handle { position: absolute; left: 0; top: 385px; }
.views {
  position: absolute;
  top: 0;
  right: 0;
  display: flex;
  flex-direction: column;
  align-items: center;
  gap: 9px;
  width: 33px;
  padding: 12px 2px 12px 0;
  border: 1px solid #d0d0d0;
  border-radius: 3px;
  background: #fff;
}
.views button {
  display: flex;
  flex-direction: column;
  align-items: center;
  gap: 8px;
}
.views .caret { margin-bottom: -2px; }
.views hr {
  width: 23px;
  height: 1px;
  margin: -2px 0;
  border: 0;
  background: #777;
}
.ring {
  position: absolute;
  top: 30px;
  left: 10px;
  pointer-events: none;
}
</style>
